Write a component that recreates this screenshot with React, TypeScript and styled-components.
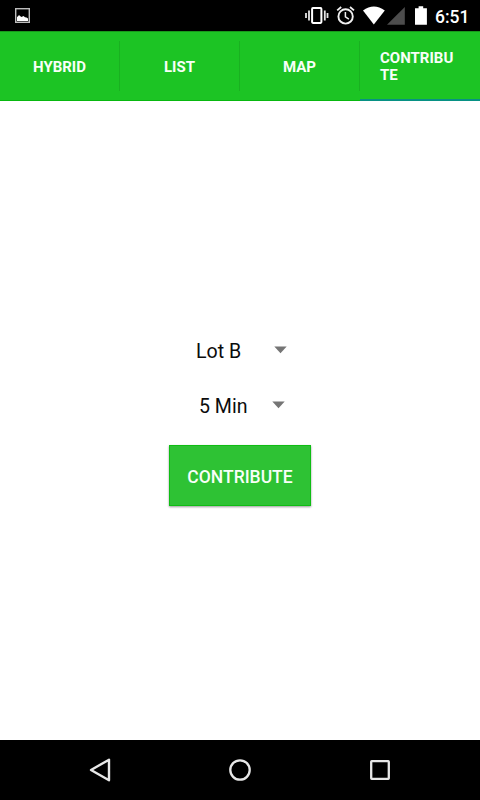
import React from "react";
import styled, { createGlobalStyle } from "styled-components";

const GlobalStyle = createGlobalStyle`
  * { box-sizing: border-box; }
  body { margin: 0; background: #fff; font-family: Roboto, sans-serif; }
`;

const Screen = styled.div`
  width: 480px;
  height: 800px;
  display: flex;
  flex-direction: column;
  background: #fff;
  overflow: hidden;
`;

const StatusBar = styled.header`
  height: 31px;
  flex: none;
  display: flex;
  align-items: flex-start;
  justify-content: space-between;
  background: #000;
  padding: 0 11px 0 14px;
`;

const StatusGroup = styled.div`
  display: flex;
  height: 31px;
`;

const StatusIcon = styled.svg<{ $gap?: number }>`
  display: block;
  flex: none;
  margin-right: ${(p) => p.$gap ?? 0}px;
`;

const Clock = styled.span`
  width: 34px;
  color: #fff;
  font-size: 17.5px;
  font-weight: 500;
  line-height: 34px;
  white-space: nowrap;
`;

const TabBar = styled.nav`
  height: 70px;
  flex: none;
  display: grid;
  grid-template-columns: repeat(4, 120px);
  background: #1cc424;
  border-top: 1px solid #17991b;
`;

const Tab = styled.div<{ $active?: boolean }>`
  display: flex;
  align-items: center;
  border-bottom: ${(p) => (p.$active ? "2px solid #079184" : "1px solid #08b80f")};
  padding-bottom: ${(p) => (p.$active ? 0 : 1)}px;
`;

const TabLabel = styled.span<{ $wrap?: boolean }>`
  flex: 1;
  padding: 2px 20px 0;
  color: #f8fff8;
  font-size: 15px;
  font-weight: 700;
  line-height: ${(p) => (p.$wrap ? 17 : 18)}px;
  text-align: ${(p) => (p.$wrap ? "left" : "center")};
  word-break: break-all;
`;

const Divider = styled.span`
  width: 1px;
  height: 50px;
  background: #19b120;
`;

const Content = styled.main`
  flex: 1;
  display: flex;
  flex-direction: column;
  align-items: center;
  padding-top: 222px;
`;

const Spinner = styled.div<{ $indent: number; $gap: number }>`
  width: 142px;
  height: 55px;
  display: flex;
  align-items: center;
  gap: ${(p) => p.$gap}px;
  padding-left: ${(p) => p.$indent}px;
  color: #0c0c0c;
  font-size: 19.6px;
  line-height: 24px;
  white-space: nowrap;
`;

const SpinnerText = styled.span<{ $width: number }>`
  width: ${(p) => p.$width}px;
  padding-top: 2px;
`;

const CaretIcon = styled.svg`
  display: block;
  margin-bottom: 2px;
`;

const Button = styled.button`
  width: 142px;
  height: 61px;
  margin-top: 12px;
  padding: 2px 0 0;
  border: 1px solid #0fbd14;
  background: #2ec234;
  box-shadow: 0 1px 2px rgba(0, 0, 0, 0.4);
  color: #f8fff8;
  font-family: inherit;
  font-size: 17.5px;
  font-weight: 500;
  line-height: 20px;
  white-space: nowrap;
`;

const NavBar = styled.footer`
  height: 60px;
  flex: none;
  display: grid;
  grid-template-columns: repeat(3, 140px);
  justify-content: center;
  align-items: center;
  justify-items: center;
  background: #000;
`;

const tabs = ["HYBRID", "LIST", "MAP", "CONTRIBUTE"];

const Caret = () => (
  <CaretIcon width="13" height="8" viewBox="0 0 13 8">
    <path d="M.3.5h12.4L6.5 7.2z" fill="#757575" />
  </CaretIcon>
);

export default function App() {
  return (
    <>
      <GlobalStyle />
      <Screen>
        <StatusBar>
          <StatusIcon width="17" height="31" viewBox="14 0 17 31">
            <rect x="15.7" y="8.7" width="13.6" height="13.6" fill="none" stroke="#bdbdbd" strokeWidth="1.4" />
            <path d="M17 21v-4l1-.8 1-1.2 1 1 1.5 1 2-1 1.5 1.2 1.5.3 1.5 1V21z" fill="#fff" />
          </StatusIcon>
          <StatusGroup>
            <StatusIcon width="24" height="31" viewBox="305 0 24 31" $gap={7}>
              <rect x="312.1" y="8.1" width="9.3" height="14.8" rx=".8" fill="none" stroke="#fff" strokeWidth="2" />
              <path d="M309 10.5v10M324.8 10.5v10M306 13v5M327.5 13v5" stroke="#e4e4e4" strokeWidth="1.8" fill="none" />
            </StatusIcon>
            <StatusIcon width="19" height="31" viewBox="336 0 19 31" $gap={8}>
              <circle cx="345.6" cy="16.4" r="7.2" fill="none" stroke="#f0f0f0" strokeWidth="1.9" />
              <path d="M337.2 10.4l4-3.4M354 10.4l-4-3.4" stroke="#f0f0f0" strokeWidth="1.8" />
              <path d="M345.4 12v4.8l3.5 2.3" fill="none" stroke="#f0f0f0" strokeWidth="1.5" />
            </StatusIcon>
            <StatusIcon width="23" height="31" viewBox="363 0 23 31" $gap={1}>
              <path d="M363 10.6Q373.8 2.6 384.8 10.6L373.8 24.6z" fill="#fff" />
            </StatusIcon>
            <StatusIcon width="18" height="31" viewBox="387 0 18 31" $gap={10}>
              <path d="M387 24.8L404.8 7v17.8z" fill="#4d4d4d" />
            </StatusIcon>
            <StatusIcon width="13" height="31" viewBox="415 0 13 31" $gap={7}>
              <path d="M415 8.2h3.6V6.3h4.6v1.9h3.7v16.6H415z" fill="#fff" />
            </StatusIcon>
            <Clock>6:51</Clock>
          </StatusGroup>
        </StatusBar>
        <TabBar>
          {tabs.map((label, i) => (
            <Tab key={label} $active={i === 3}>
              <TabLabel $wrap={i === 3}>{label}</TabLabel>
              {i < 3 && <Divider />}
            </Tab>
          ))}
        </TabBar>
        <Content>
          <Spinner $indent={27} $gap={32}>
            <SpinnerText $width={46}>Lot B</SpinnerText>
            <Caret />
          </Spinner>
          <Spinner $indent={30} $gap={24}>
            <SpinnerText $width={49}>5 Min</SpinnerText>
            <Caret />
          </Spinner>
          <Button>CONTRIBUTE</Button>
        </Content>
        <NavBar>
          <svg width="24" height="26" viewBox="88 757 24 26">
            <path d="M109 759.7v20.6L91 770z" fill="none" stroke="#e8e8e8" strokeWidth="2.4" strokeLinejoin="round" />
          </svg>
          <svg width="24" height="24" viewBox="0 0 24 24">
            <circle cx="12" cy="12" r="9.7" fill="none" stroke="#e8e8e8" strokeWidth="2.3" />
          </svg>
          <svg width="24" height="24" viewBox="0 0 24 24">
            <rect x="3.2" y="3.2" width="17.6" height="17.6" rx=".5" fill="none" stroke="#e8e8e8" strokeWidth="2.3" />
          </svg>
        </NavBar>
      </Screen>
    </>
  );
}
